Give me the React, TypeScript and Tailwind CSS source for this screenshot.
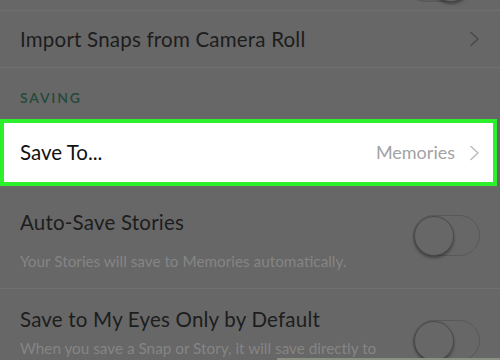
import React from 'react';

const Chevron: React.FC<{ color: string }> = ({ color }) => (
  <svg width="11" height="16" viewBox="0 0 11 16" fill="none">
    <path d="M2 1.5 L9 8 L2 14.5" stroke={color} strokeWidth="1.6" strokeLinecap="round" strokeLinejoin="round" />
  </svg>
);

const Toggle: React.FC<{ on?: boolean }> = ({ on }) => (
  <div
    className={`w-[67px] h-[41px] shrink-0 rounded-full border border-[#585858] flex items-center ${
      on ? 'justify-end bg-[#5d5d5d]' : 'justify-start'
    }`}
  >
    <div className="w-[40px] h-[40px] rounded-full border border-[#4a4a4a] shadow-[0_2px_3px_rgba(0,0,0,0.35)] bg-[#676767]" />
  </div>
);

export default function App() {
  return (
    <div
      className="w-[500px] h-[360px] overflow-hidden bg-[#676767] relative"
      style={{ fontFamily: 'Lato, "Open Sans", sans-serif' }}
    >
      {/* row cut off at the top */}
      <div className="h-[11px] flex justify-end pr-[28px] overflow-hidden border-b border-[#6f6f6f]">
        <div className="-mt-[39px]">
          <Toggle on />
        </div>
      </div>

      <div className="h-[57px] flex items-center justify-between pl-[20px] pr-[20px] border-b border-[#6f6f6f]">
        <span className="text-[20.5px] tracking-[0.01em] text-[#1d1d1d]">Import Snaps from Camera Roll</span>
        <Chevron color="#4a4a4a" />
      </div>

      <div className="h-[51px] pl-[20px] pt-[17px]">
        <span className="text-[14px] font-semibold tracking-[0.13em] text-[#23493a]">SAVING</span>
      </div>

      <div className="w-[497px] h-[67px] border-[4px] border-[#2cf02c] bg-white flex items-center justify-between pl-[16px] pr-[13px]">
        <span className="text-[20.5px] text-[#111111]">Save To...</span>
        <div className="flex items-center gap-[14px]">
          <span className="text-[18px] text-[#a3a3a3]">Memories</span>
          <Chevron color="#bdbdbd" />
        </div>
      </div>

      <div className="h-[103px] flex items-start justify-between pl-[20px] pr-[20px] border-b border-[#6f6f6f]">
        <div className="pt-[22px]">
          <div className="text-[20.5px] tracking-[0.01em] text-[#1d1d1d] leading-[28px]">Auto-Save Stories</div>
          <div className="text-[15.3px] text-[#858585] mt-[14px]">Your Stories will save to Memories automatically.</div>
        </div>
        <div className="pt-[29px]">
          <Toggle />
        </div>
      </div>

      <div className="flex items-start justify-between pl-[20px] pr-[20px]">
        <div className="pt-[16px]">
          <div className="text-[20.5px] tracking-[0.01em] text-[#1d1d1d] leading-[28px]">Save to My Eyes Only by Default</div>
          <div className="text-[15.3px] text-[#858585] mt-[4px]">When you save a Snap or Story, it will save directly to</div>
        </div>
        <div className="pt-[31px]">
          <Toggle />
        </div>
      </div>

      <div className="absolute left-[277px] right-0 bottom-0 h-[2px] bg-[#8b9183]" />
    </div>
  );
}
